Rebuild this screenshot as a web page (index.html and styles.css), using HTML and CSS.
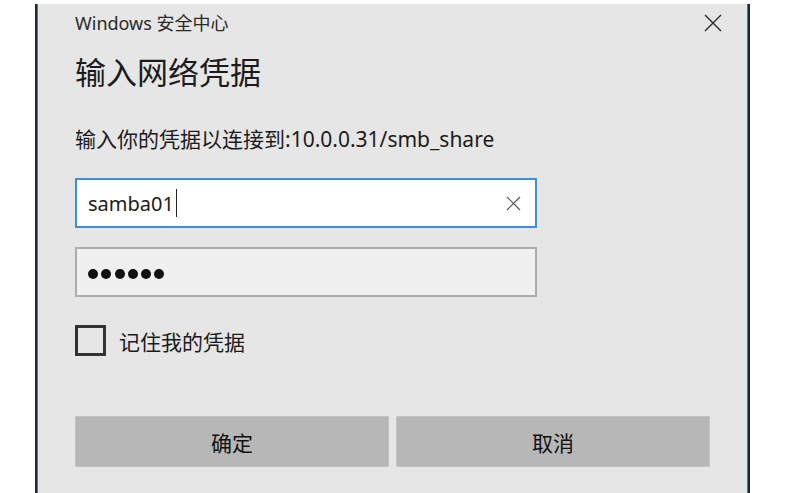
FILE: index.html
```html
<!DOCTYPE html>
<html lang="zh-CN">
<head>
    <meta charset="UTF-8">
    <meta name="viewport" content="width=device-width, initial-scale=1.0">
    <title>Windows 安全中心</title>
    <link rel="stylesheet" href="styles.css">
</head>
<body>
    <div class="dialog">
        <div class="titlebar">
            <span class="app-name">Windows 安全中心</span>
            <button class="close" aria-label="关闭">
                <svg width="18" height="18" viewBox="0 0 18 18">
                    <path d="M1 1 L17 17 M17 1 L1 17" stroke="#2b2b2b" stroke-width="1.4" fill="none"/>
                </svg>
            </button>
        </div>

        <h1 class="heading">输入网络凭据</h1>
        <p class="prompt">输入你的凭据以连接到:10.0.0.31/smb_share</p>

        <div class="field field-active">
            <span class="field-text">samba01</span><span class="caret"></span>
            <svg class="clear" width="15" height="15" viewBox="0 0 15 15">
                <path d="M1 1 L14 14 M14 1 L1 14" stroke="#555" stroke-width="1.2" fill="none"/>
            </svg>
        </div>

        <div class="field field-password" aria-label="密码">
            <span class="dot"></span>
            <span class="dot"></span>
            <span class="dot"></span>
            <span class="dot"></span>
            <span class="dot"></span>
            <span class="dot"></span>
        </div>

        <label class="remember">
            <span class="checkbox"></span>记住我的凭据
        </label>

        <div class="actions">
            <button class="btn">确定</button>
            <button class="btn">取消</button>
        </div>
    </div>
</body>
</html>
```

FILE: styles.css
```css
html, body {
    margin: 0;
    background: #fff;
    overflow: hidden;
}
body {
    font-family: "Noto Sans", "Noto Sans CJK SC", sans-serif;
    color: #1b1b1b;
}
.dialog {
    box-sizing: border-box;
    width: 715px;
    height: 489px;
    margin: 4px 0 0 35px;
    padding: 0 38px 0 38px;
    background: #e6e6e6;
    border-left: 2px solid #1b2735;
    border-right: 2px solid #1b2735;
    box-shadow: inset 1px 0 #2e80d4, inset -1px 0 #2e80d4;
}
.titlebar {
    height: 38px;
    display: flex;
    align-items: center;
    justify-content: space-between;
}
.app-name {
    margin-bottom: 3px;
    font-size: 18px;
    color: #2a2a2a;
}
.close {
    display: flex;
    padding: 0;
    margin-right: -12px;
    border: none;
    background: none;
}
.heading {
    margin: 10px 0 0;
    font-size: 31px;
    font-weight: normal;
    line-height: 40px;
}
.prompt {
    margin: 33px 0 0;
    font-size: 21px;
    line-height: 28px;
}
.field {
    box-sizing: border-box;
    width: 462px;
    height: 50px;
    margin-top: 25px;
    padding: 0 14px 0 11px;
    display: flex;
    align-items: center;
    border: 2px solid;
    font-size: 20px;
}
.field-active {
    background: #fff;
    border-color: #3b8ee0;
}
.caret {
    width: 1.5px;
    height: 28px;
    margin-left: 2px;
    background: #222;
}
.clear {
    margin-left: auto;
}
.field-password {
    margin-top: 19px;
    gap: 3.3px;
    background: #f0f0f0;
    border-color: #acacac;
}
.dot {
    width: 10px;
    height: 10px;
    margin-top: 4px;
    border-radius: 50%;
    background: #111;
}
.remember {
    display: flex;
    align-items: center;
    gap: 13px;
    margin-top: 28px;
    font-size: 21px;
}
.checkbox {
    box-sizing: border-box;
    width: 31px;
    height: 31px;
    border: 3px solid #333;
}
.actions {
    display: flex;
    gap: 7px;
    margin-top: 60px;
}
.btn {
    width: 314px;
    height: 51px;
    padding: 0;
    background: #b7b7b7;
    border: 1px solid #c3c3c3;
    font-family: inherit;
    font-size: 21px;
    color: #111;
}
```
